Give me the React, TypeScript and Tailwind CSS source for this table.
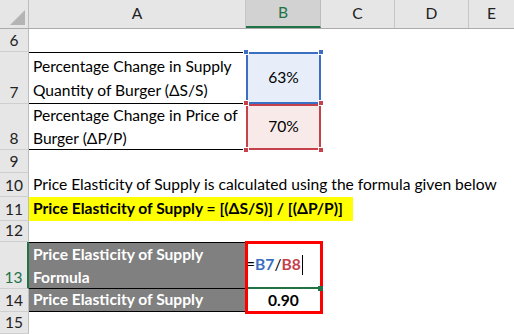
import React from "react";

const font = { fontFamily: "Lato, 'Open Sans', sans-serif" };

type RowProps = {
  n: number | string;
  h: number;
  active?: boolean;
  children?: React.ReactNode;
};

function Row({ n, h, active, children }: RowProps) {
  return (
    <div className="flex" style={{ height: h }}>
      <div
        className={`w-[29px] shrink-0 bg-[#e6e6e6] border-b border-[#cfcfcf] flex items-end justify-center pb-[1px] text-[15.5px] leading-[20px] ${
          active ? "border-r-2 border-r-[#217346] text-[#217346] bg-[#d2d2d2]" : "border-r border-r-[#bdbdbd] text-[#222]"
        }`}
      >
        {n}
      </div>
      <div className="flex-1 flex relative">{children}</div>
    </div>
  );
}

export default function App() {
  return (
    <div className="w-[514px] h-[334px] overflow-hidden bg-white text-black relative text-[15.6px]" style={font}>
      {/* column headers */}
      <div className="flex h-[29px] bg-[#e6e6e6] border-b border-[#ababab]">
        <div className="w-[29px] shrink-0 border-r border-[#bdbdbd] relative">
          <div
            className="absolute right-[3px] bottom-[3px] w-[15px] h-[15px] bg-[#b4b4b4]"
            style={{ clipPath: "polygon(100% 0, 100% 100%, 0 100%)" }}
          />
        </div>
        <div className="w-[217px] shrink-0 flex items-center justify-center text-[#222] border-r border-[#c6c6c6]">
          A
        </div>
        <div className="w-[75px] shrink-0 flex items-center justify-center text-[#217346] bg-[#d2d2d2] border-b-2 border-[#217346] border-r border-r-[#bdbdbd]">
          B
        </div>
        <div className="w-[74px] shrink-0 flex items-center justify-center text-[#222] border-r border-[#c6c6c6]">
          C
        </div>
        <div className="w-[74px] shrink-0 flex items-center justify-center text-[#222] border-r border-[#c6c6c6]">
          D
        </div>
        <div className="flex-1 flex items-center justify-center text-[#222]">E</div>
      </div>

      <Row n={6} h={23} />

      <Row n={7} h={52}>
        <div className="w-[217px] border-t border-b border-black pl-[4px] flex flex-col justify-center leading-[24px]">
          <div>Percentage Change in Supply</div>
          <div>Quantity of Burger (ΔS/S)</div>
        </div>
        <div className="w-[75px] bg-[#e8eef9] border-2 border-[#3a6fc4] flex items-center justify-center">
          63%
        </div>
        <span className="absolute left-[214px] top-[-3px] w-[6px] h-[6px] bg-[#3a6fc4] border border-white" />
        <span className="absolute left-[289px] top-[-3px] w-[6px] h-[6px] bg-[#3a6fc4] border border-white" />
      </Row>

      <Row n={8} h={46}>
        <div className="w-[217px] border-b border-black pl-[4px] flex flex-col justify-center leading-[23px]">
          <div>Percentage Change in Price of</div>
          <div>Burger (ΔP/P)</div>
        </div>
        <div className="w-[75px] bg-[#f9eaea] border-2 border-[#c5424c] flex items-center justify-center">
          70%
        </div>
        <span className="absolute left-[214px] top-[-4px] w-[6px] h-[6px] bg-[#c5424c] border border-white" />
        <span className="absolute left-[289px] top-[-4px] w-[6px] h-[6px] bg-[#c5424c] border border-white" />
        <span className="absolute left-[214px] bottom-[-3px] w-[6px] h-[6px] bg-[#c5424c] border border-white" />
        <span className="absolute left-[289px] bottom-[-3px] w-[6px] h-[6px] bg-[#c5424c] border border-white" />
      </Row>

      <Row n={9} h={23} />

      <Row n={10} h={24}>
        <div className="pl-[4px] flex items-center whitespace-nowrap">
          Price Elasticity of Supply is calculated using the formula given below
        </div>
      </Row>

      <Row n={11} h={24}>
        <div className="w-[324px] bg-[#ffff00] pl-[4px] flex items-center font-bold whitespace-nowrap">
          Price Elasticity of Supply = [(ΔS/S)] / [(ΔP/P)]
        </div>
      </Row>

      <Row n={12} h={21} />

      <Row n={13} h={47} active>
        <div className="w-[217px] bg-[#808080] border-t border-b border-black pl-[4px] flex flex-col justify-center leading-[23px] font-bold text-white">
          <div>Price Elasticity of Supply</div>
          <div>Formula</div>
        </div>
        <div className="w-[75px] flex items-center whitespace-nowrap border-b-2 border-[#217346]">
          <span>=</span>
          <span className="font-bold text-[#3a6fc4]">B7</span>
          <span>/</span>
          <span className="font-bold text-[#c5424c]">B8</span>
          <span className="w-px h-[20px] bg-black ml-[1px]" />
        </div>
      </Row>

      <Row n={14} h={23}>
        <div className="w-[217px] bg-[#808080] border-b border-black pl-[4px] flex items-center font-bold text-white">
          Price Elasticity of Supply
        </div>
        <div className="w-[75px] flex items-center justify-center font-bold">0.90</div>
      </Row>

      <Row n={15} h={22} />

      {/* highlighted output block */}
      <div className="absolute left-[245px] top-[241px] w-[78px] h-[73px] border-[3px] border-[#ff0000] pointer-events-none" />
      <span className="absolute left-[318px] top-[286px] w-[5px] h-[5px] bg-[#217346]" />
    </div>
  );
}
